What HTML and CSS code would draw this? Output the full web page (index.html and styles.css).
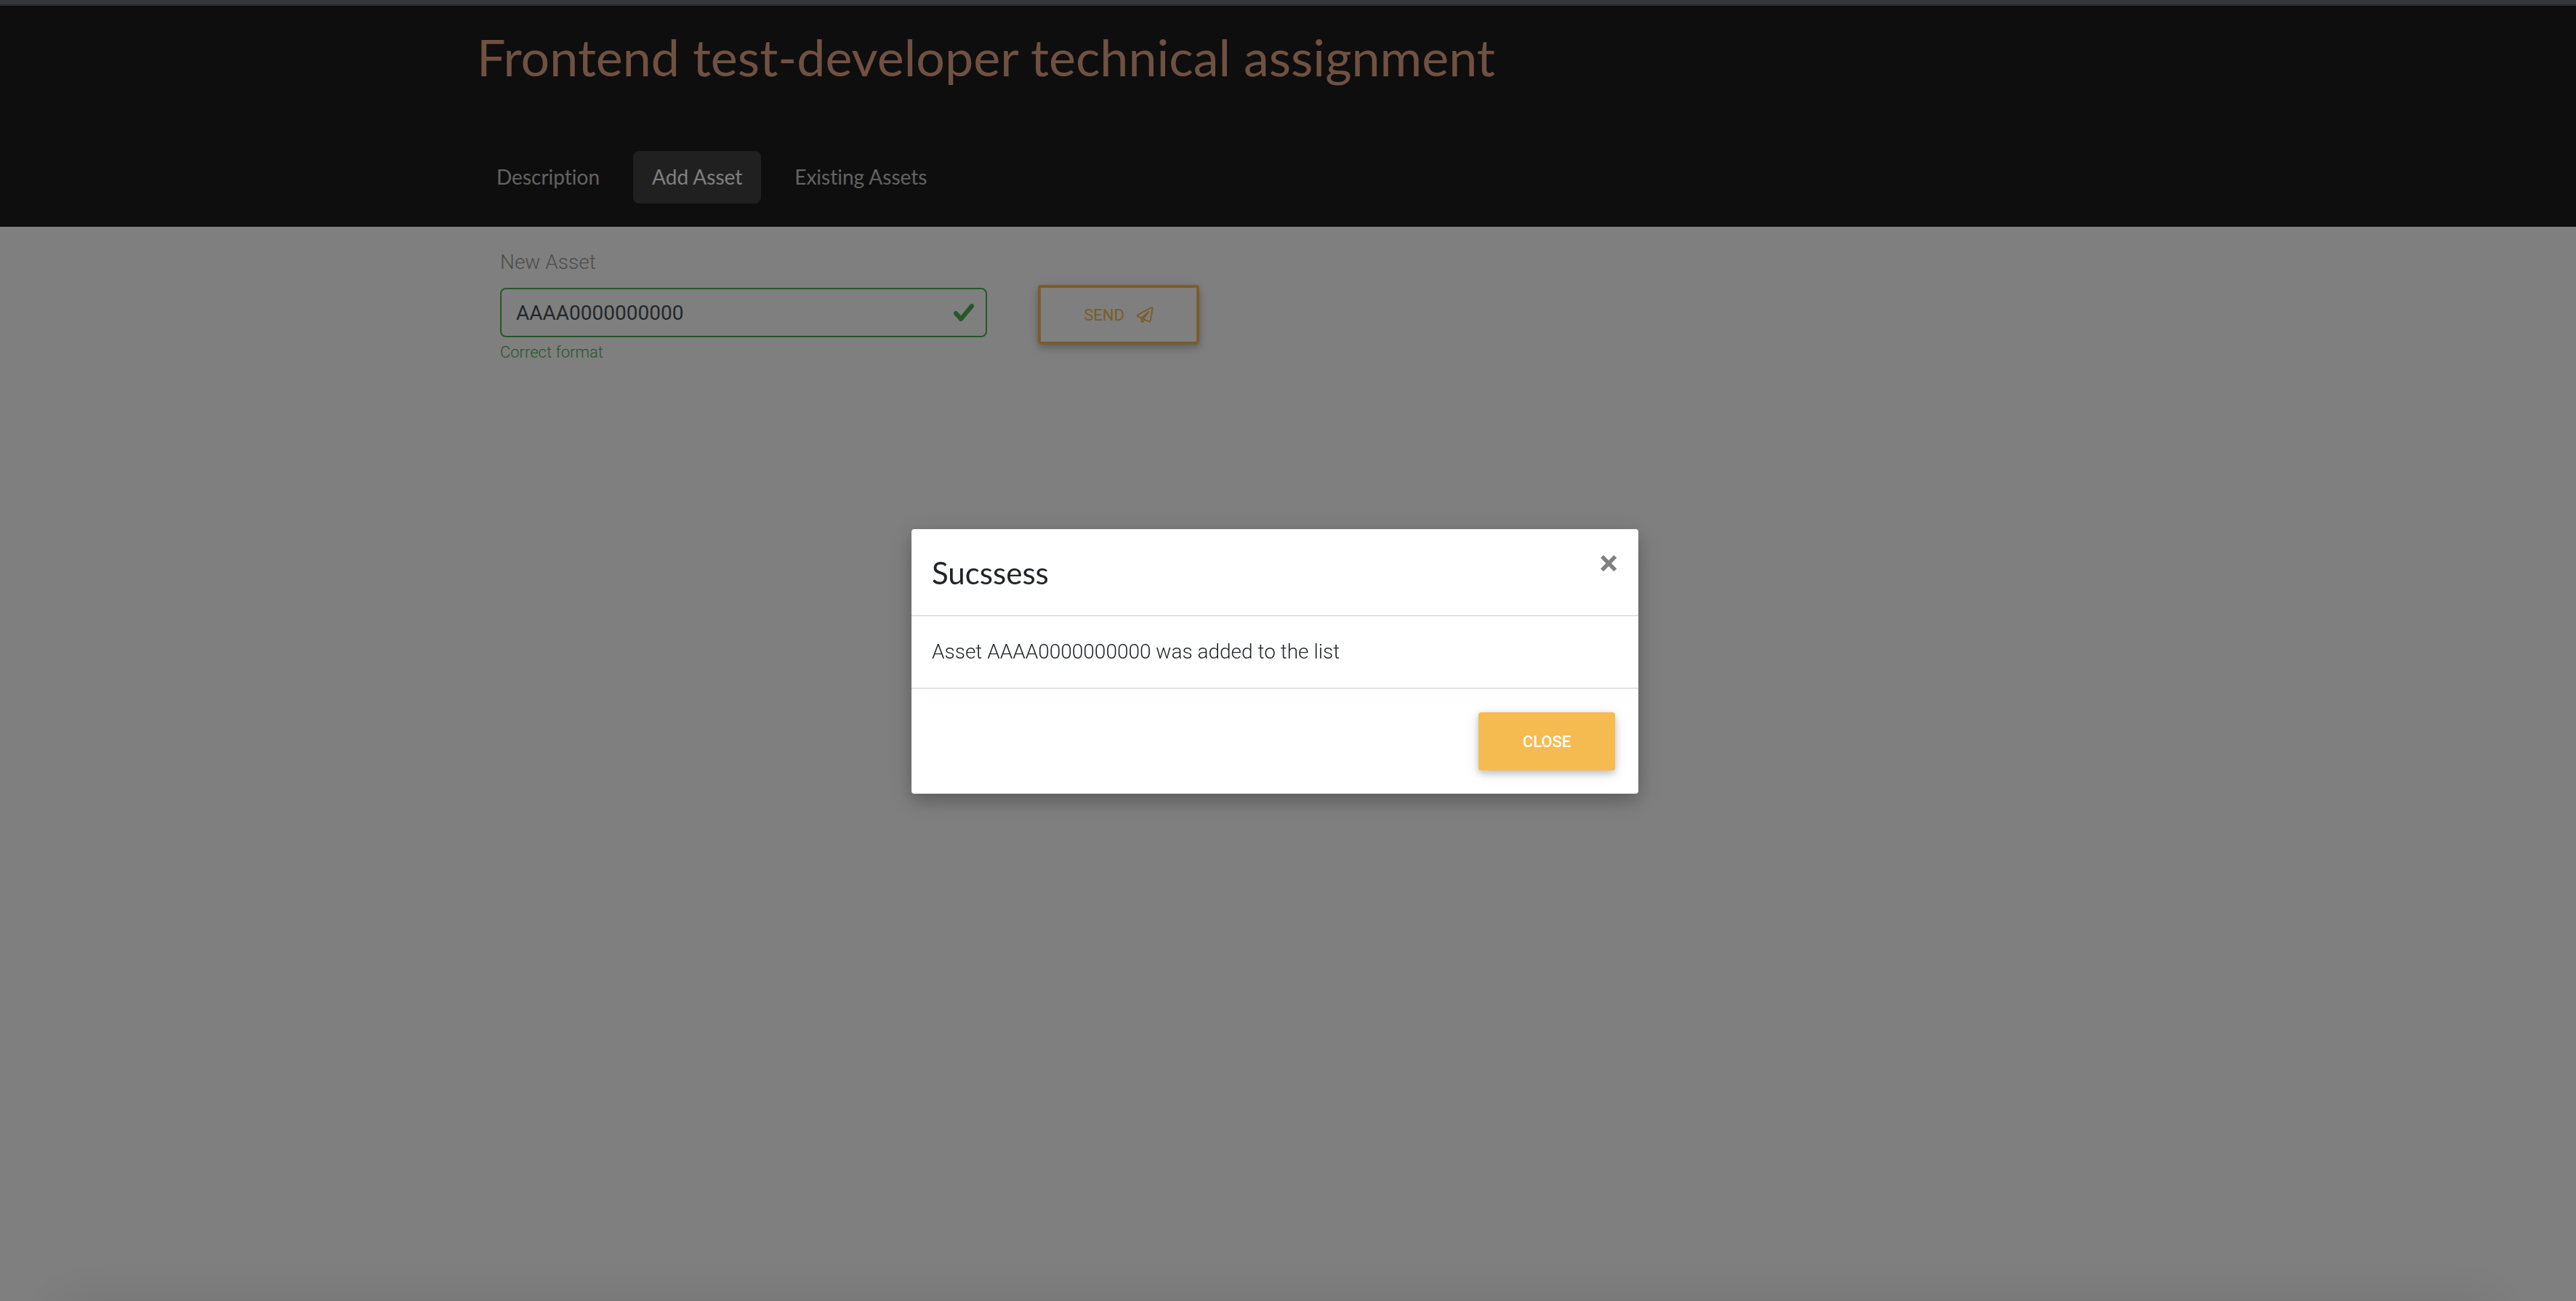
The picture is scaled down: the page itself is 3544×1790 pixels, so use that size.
FILE: index.html
```html
<!DOCTYPE html>
<html lang="en">
<head>
<meta charset="utf-8">
<title>Frontend test-developer technical assignment</title>
<meta name="viewport" content="width=device-width, initial-scale=1">
<link rel="stylesheet" href="styles.css">
</head>
<body>
<div class="page">
  <header class="header">
    <div class="container">
      <h1 class="header-title">Frontend test-developer technical assignment</h1>
      <nav class="tabs">
        <a class="tab" href="#description">Description</a>
        <a class="tab tab-active" href="#add" aria-current="page">Add Asset</a>
        <a class="tab" href="#assets">Existing Assets</a>
      </nav>
    </div>
  </header>
  <main class="container">
    <form class="asset-form">
      <div class="field">
        <label class="field-label" for="asset">New Asset</label>
        <div class="field-control">
          <input class="field-input" id="asset" type="text" value="AAAA0000000000" aria-describedby="asset-hint">
          <svg class="field-check" viewBox="0 0 28 24" aria-hidden="true"><path d="M3 13l7 8L25 3" /></svg>
        </div>
        <p class="field-hint" id="asset-hint">Correct format</p>
      </div>
      <button class="button button-outline" type="button">Send
        <svg class="button-icon" viewBox="0 0 24 24" aria-hidden="true"><path d="M21 2.200L2.500 12.200q-1.500 1 0 2L7.500 16.800V21q1 2 2.500 0L12 18.800l6 2.600q1.600.3 1.800-1.400L22.500 3.300q0-1.800-1.500-1.100zM7.500 16.800L17.500 7.800 9.800 18l2.200.800"/></svg>
      </button>
    </form>
  </main>
</div>
<div class="backdrop">
  <section class="modal" role="dialog" aria-modal="true" aria-labelledby="modal-title">
    <header class="modal-header">
      <h2 class="modal-title" id="modal-title">Sucssess</h2>
      <button class="modal-dismiss" type="button" aria-label="Dismiss">×</button>
    </header>
    <p class="modal-body">Asset AAAA0000000000 was added to the list</p>
    <footer class="modal-footer">
      <button class="button button-solid" type="button">Close</button>
    </footer>
  </section>
</div>
</body>
</html>
```
FILE: styles.css
```css
* { box-sizing: border-box; }

body {
  margin: 0;
  background: #fff;
  color: #212529;
  font: 300 28px/42px Roboto, sans-serif;
}

h1, h2, p { margin: 0; }

.page {
  min-height: 100vh;
  border-top: 6px solid #6c6e76;
}

.container {
  width: 63%;
  max-width: 2232px;
  margin: 0 auto;
}

.header {
  height: 306px;
  border-top: 2px solid #545454;
  background: #1c1c1c;
}

.header-title {
  padding: 26px 0 42px;
  color: #e0a383;
  font: 400 70px/88px Lato, sans-serif;
}

.tabs {
  display: flex;
  gap: 20px;
  padding: 44px 0 0 1px;
}

.tab {
  padding: 13px 26px 15px;
  border-radius: 8px;
  color: #c4c4c4;
  font: 400 28px/44px Lato, sans-serif;
  font-variant-ligatures: none;
  text-decoration: none;
}

.tab-active {
  background: #404040;
  color: #fff;
}

.asset-form {
  display: flex;
  align-items: flex-start;
  gap: 70px;
  padding: 26px 32px;
}

.field { width: 670px; }

.field-label {
  display: block;
  height: 58px;
  line-height: 46px;
  color: #999;
}

.field-control {
  display: grid;
  align-items: center;
}

.field-input {
  grid-area: 1 / 1;
  width: 100%;
  height: 68px;
  padding: 0 20px;
  border: 2px solid #4caf50;
  border-radius: 8px;
  background: transparent;
  color: #495057;
  font: 400 28px Roboto, sans-serif;
}

.field-check {
  grid-area: 1 / 1;
  justify-self: end;
  width: 28px;
  height: 24px;
  margin-right: 18px;
  fill: none;
  stroke: #4caf50;
  stroke-width: 6;
  stroke-linecap: round;
  stroke-linejoin: round;
}

.field-hint {
  color: #4caf50;
  font-size: 22px;
  line-height: 42px;
}

.button {
  display: flex;
  align-items: center;
  justify-content: center;
  gap: 16px;
  padding: 0;
  border-radius: 4px;
  font: 500 22px Roboto, sans-serif;
  text-transform: uppercase;
  box-shadow: 0 4px 10px rgba(0, 0, 0, .2), 0 4px 20px rgba(0, 0, 0, .1);
}

.button-outline {
  width: 222px;
  height: 82px;
  margin-top: 54px;
  border: 4px solid #f6bb50;
  background: transparent;
  color: #f6bb50;
  font-weight: 400;
}

.button-icon {
  width: 24px;
  height: 24px;
  fill: none;
  stroke: currentColor;
  stroke-width: 2;
  stroke-linejoin: round;
}

.button-solid {
  width: 188px;
  height: 80px;
  border: 0;
  background: #f6bb50;
  color: #fff;
}

.backdrop {
  position: fixed;
  inset: 0;
  display: flex;
  align-items: center;
  justify-content: center;
  overflow: hidden;
  padding: 30px 36px 0 0;
  background: rgba(0, 0, 0, .5);
}

/* soft shade rising from the bottom edge of the window */
.backdrop::after {
  content: "";
  position: absolute;
  top: 100%;
  left: 80px;
  right: 110px;
  height: 120px;
  box-shadow: 0 0 70px rgba(0, 0, 0, .1);
}

.modal {
  width: 1000px;
  border-radius: 4px;
  background: #fff;
  box-shadow: 0 10px 22px rgba(0, 0, 0, .18), 0 8px 40px rgba(0, 0, 0, .15);
}

.modal-header {
  display: flex;
  align-items: flex-start;
  justify-content: space-between;
  padding: 28px;
  border-bottom: 2px solid #dee2e6;
}

.modal-title { font: 400 42px/64px Lato, sans-serif; height: 62px; }

.modal-dismiss {
  padding: 0;
  border: 0;
  background: none;
  color: #808080;
  font: 700 48px/38px Roboto, sans-serif;
}

.modal-body { padding: 28px; }

.modal-footer {
  display: flex;
  justify-content: flex-end;
  padding: 32px;
  border-top: 2px solid #dee2e6;
}
```
